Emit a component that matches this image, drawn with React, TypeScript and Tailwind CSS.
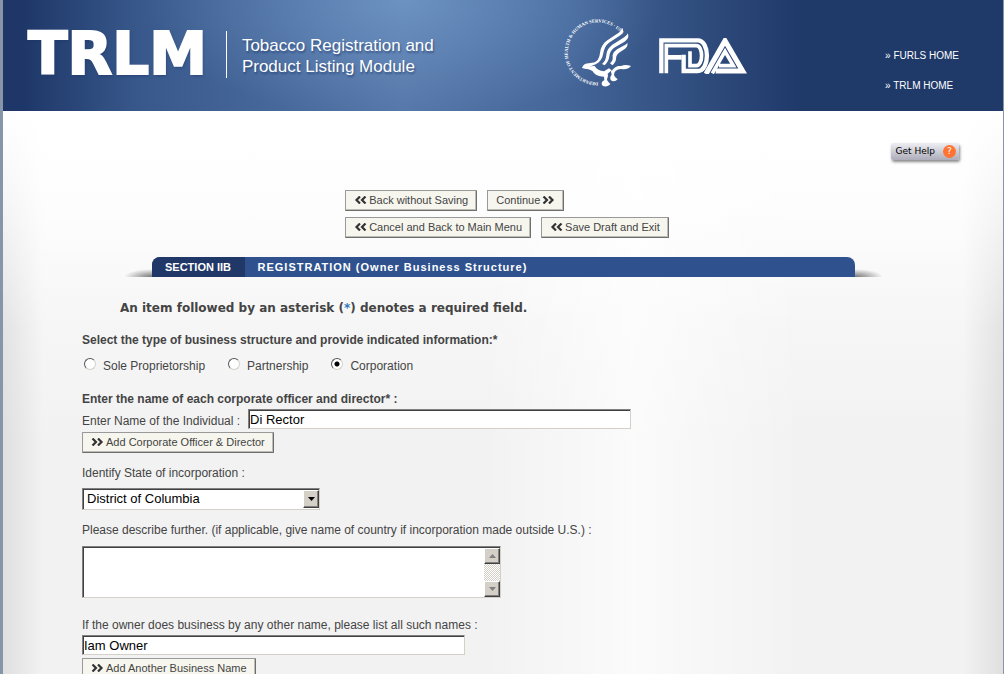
import { useState } from "react";
import type { ReactNode } from "react";

const Chevrons = ({ left }: { left?: boolean }) => (
  <svg viewBox="0 0 13 8" className="w-[13px] h-2 shrink-0" aria-hidden="true">
    <path
      d={left ? "M6 0.500L2.500 4L6 7.500M11.500 0.500L8 4L11.500 7.500" : "M1.500 0.500L5 4L1.500 7.500M7 0.500L10.500 4L7 7.500"}
      fill="none"
      stroke="#333"
      strokeWidth="2.2"
    />
  </svg>
);

const Button = ({ children }: { children: ReactNode }) => (
  <button
    type="button"
    className="h-[21px] px-2 pb-[2px] flex items-center gap-[2px] text-[11px] leading-4 whitespace-nowrap text-[#444] bg-[#f6f6ee] rounded-[1px] border border-t-[#999] border-l-[#999] border-r-[#6e6e6e] border-b-[#6e6e6e] shadow-[inset_-1px_-1px_0_#bdbdb6]"
  >
    {children}
  </button>
);

const inputClass =
  "block h-5 px-px text-[13px] text-black bg-white border border-t-[#808080] border-l-[#808080] border-r-[#d4d0c8] border-b-[#d4d0c8] shadow-[inset_1px_1px_0_#404040] outline-none";

const HhsLogo = () => (
  <svg viewBox="0 0 240 240" className="w-20 h-20" role="img" aria-label="HHS">
    <defs>
      <path id="seal" d="M118 217A90 90 0 1 1 205 112" />
    </defs>
    <text
      fill="#fff"
      className="text-[14px] font-bold font-['Liberation_Serif',serif]"
    >
      <textPath href="#seal">
        DEPARTMENT OF HEALTH &amp; HUMAN SERVICES · USA
      </textPath>
    </text>
    <g fill="#fff">
      <path d="M189 53C196 60 191 71 182 77L152 97C140 106 136 116 133 130C130 146 123 157 110 163L78 176L69 174C72 164 80 160 90 160L107 157C118 151 121 142 123 128C125 112 133 99 145 91L178 69C184 65 188 60 189 53Z" />
      <path d="M206 70C212 82 204 91 194 97L168 112C157 119 153 127 151 138C150 149 145 158 137 166L129 162C138 155 141 146 142 135C143 122 149 112 160 104L191 85C199 80 204 76 206 70Z" />
      <path d="M205 98C208 109 199 117 189 122C177 129 171 135 171 146C171 154 166 160 160 166L153 160C160 153 162 148 161 140C160 130 167 122 177 116L192 108C199 104 203 102 205 98Z" />
      <path d="M78 170L107 168C113 178 122 183 135 184L150 175L158 181L146 191C149 199 144 204 144 209C146 214 150 218 154 222C149 229 139 231 132 228C125 222 128 215 136 210L135 200C119 200 107 194 101 184C95 179 87 177 78 176Z" />
      <path d="M156 184L166 174C172 169 178 168 186 168C196 163 206 165 216 168C209 176 200 179 187 177C178 177 172 180 167 186L165 195C167 201 172 204 176 208C170 215 161 216 155 210C152 203 155 198 158 195Z" />
    </g>
  </svg>
);

const FdaLogo = () => (
  <svg viewBox="0 0 264 108" className="w-[88px] h-9" role="img" aria-label="FDA">
    <g fill="none" stroke="#fff" strokeWidth="13">
      <path d="M7 106V7H116C153 7 153 99 116 99H74V50" />
      <path d="M141 108L198 8L251 99H170" strokeWidth="15" />
    </g>
    <g fill="none" stroke="#fff" strokeWidth="11">
      <path d="M22 106V23H112C133 23 133 83 112 83H93V40" />
      <path d="M20 58H68" strokeWidth="14" />
      <path d="M160 106L198 40L223 83H180" />
    </g>
  </svg>
);

const ScrollArrow = ({ up }: { up?: boolean }) => (
  <span className="h-4 flex items-center justify-center bg-[#d4d0c8] border border-t-white border-l-white border-r-[#404040] border-b-[#404040] shadow-[inset_-1px_-1px_0_#808080]">
    <svg viewBox="0 0 7 4" className="w-[7px] h-1">
      <path d={up ? "M0 4L3.5 0L7 4Z" : "M0 0L3.5 4L7 0Z"} fill="#808080" />
    </svg>
  </span>
);

const structures = ["Sole Proprietorship", "Partnership", "Corporation"];

const App = () => {
  const [structure, setStructure] = useState("Corporation");

  return (
    <div className="min-h-screen border-l-[3px] border-r border-[#8795a8] font-['Liberation_Sans',Arial,sans-serif] text-xs leading-4 text-[#444] bg-[#f2f2f2]">
      <header className="min-h-[111px] pl-[25px] pr-11 flex items-start justify-between text-white bg-[radial-gradient(260px_120px_at_40%_0%,#7fabd888,#7fabd800),linear-gradient(90deg,#1e3768_2%,#39598c_14%,#5576a8_40%,#456699_56%,#1f3969_80%)]">
        <div className="pt-[31px] flex items-center">
          <h1 className="font-['DejaVu_Sans',sans-serif] font-bold text-[58px] leading-[47px] [-webkit-text-stroke:2px_#fff] [text-shadow:1px_2px_3px_#1e376899]">
            TRLM
          </h1>
          <div className="ml-[19px] h-[47px] w-px bg-white" />
          <p className="ml-[15px] pt-[2px] text-[17px] leading-[21px] [text-shadow:1px_2px_2px_#1e376899]">
            Tobacco Registration and
            <br />
            Product Listing Module
          </p>
        </div>
        <div className="pt-[10px] pr-3 flex items-center gap-5">
          <HhsLogo />
          <div className="pt-3">
            <FdaLogo />
          </div>
        </div>
        <nav className="pt-12 flex flex-col gap-[14px] text-[10px]">
          <a href="#furls">» FURLS HOME</a>
          <a href="#trlm">» TRLM HOME</a>
        </nav>
      </header>

      <main className="pt-8 pb-5 bg-[linear-gradient(180deg,#fff,#ffffff00_220px),linear-gradient(90deg,#00000014,#00000000_4%,#00000000_96%,#00000014),linear-gradient(90deg,#ffffff00_48%,#ffffffaa_63%,#ffffff00_80%),linear-gradient(180deg,#fff,#f8f8f8_140px,#f2f2f2_330px)]">
        <div className="pr-11 flex justify-end">
          <button
            type="button"
            className="h-[17px] pl-[5px] pr-[3px] pb-px flex items-center gap-2 rounded-xs font-['DejaVu_Sans',sans-serif] text-[9px] leading-4 text-black bg-linear-to-b from-[#eeeef2] to-[#adadbb] shadow-[1px_2px_3px_#888]"
          >
            Get Help
            <span className="size-[13px] rounded-full bg-[#ff7433] text-white leading-[13px]">
              ?
            </span>
          </button>
        </div>

        <div className="mt-[30px] pl-2 flex justify-center">
          <div className="flex flex-col gap-[6px]">
            <div className="flex gap-[10px]">
              <Button>
                <Chevrons left />
                Back without Saving
              </Button>
              <Button>
                Continue
                <Chevrons />
              </Button>
            </div>
            <div className="flex gap-[10px]">
              <Button>
                <Chevrons left />
                Cancel and Back to Main Menu
              </Button>
              <Button>
                <Chevrons left />
                Save Draft and Exit
              </Button>
            </div>
          </div>
        </div>

        <div className="mt-[19px] flex justify-center items-end">
          <div className="w-7 h-2 bg-[radial-gradient(28px_8px_at_100%_100%,#777,#77777700)]" />
          <h2 className="w-full max-w-[703px] flex text-[11px] leading-5 font-bold text-white bg-[#2f528f] rounded-t-lg overflow-hidden">
            <span className="w-[93px] text-center bg-[#1f3868]">SECTION IIB</span>
            <span className="pl-[13px] tracking-[1px]">
              REGISTRATION (Owner Business Structure)
            </span>
          </h2>
          <div className="w-7 h-2 bg-[radial-gradient(28px_8px_at_0%_100%,#777,#77777700)]" />
        </div>

        <p className="mt-[23px] pl-[117px] font-['DejaVu_Sans',Verdana,sans-serif] text-xs leading-4 font-bold">
          An item followed by an asterisk (<span className="text-[#2f78b7]">*</span>) denotes a
          required field.
        </p>

        <form className="px-[79px] flex flex-col items-start">
          <fieldset className="mt-4">
            <legend className="font-bold">
              Select the type of business structure and provide indicated information:*
            </legend>
            <div className="mt-[10px] pl-[2px] flex gap-[23px]">
              {structures.map((name) => (
                <label key={name} className="flex items-center gap-[7px]">
                  <input
                    type="radio"
                    name="structure"
                    checked={structure === name}
                    onChange={() => setStructure(name)}
                    className="appearance-none size-3 mb-1 rounded-full bg-white border border-t-[#555] border-l-[#555] border-r-[#d4d0c8] border-b-[#d4d0c8] checked:bg-[radial-gradient(circle,#000_2px,#fff_3px)]"
                  />
                  {name}
                </label>
              ))}
            </div>
          </fieldset>

          <h3 className="mt-[17px] font-bold">
            Enter the name of each corporate officer and director* :
          </h3>
          <div className="mt-[2px] flex items-center gap-2">
            <label htmlFor="individual" className="pt-1">
              Enter Name of the Individual :
            </label>
            <input id="individual" defaultValue="Di Rector" className={`${inputClass} w-[383px]`} />
          </div>
          <div className="mt-[3px]">
            <Button>
              <Chevrons />
              Add Corporate Officer &amp; Director
            </Button>
          </div>

          <label htmlFor="state" className="mt-3">
            Identify State of incorporation :
          </label>
          <div className="mt-[7px] relative">
            <select
              id="state"
              defaultValue="dc"
              className="block appearance-none w-[238px] h-[22px] pl-1 pr-5 text-[13px] text-black bg-white border border-t-[#808080] border-l-[#808080] border-r-[#d4d0c8] border-b-[#d4d0c8] shadow-[inset_1px_1px_0_#404040] outline-none"
            >
              <option value="dc">District of Columbia</option>
              <option value="md">Maryland</option>
              <option value="va">Virginia</option>
            </select>
            <span className="absolute top-[2px] right-px w-4 h-[18px] flex items-center justify-center pointer-events-none bg-[#d4d0c8] border border-t-white border-l-white border-r-[#404040] border-b-[#404040] shadow-[inset_-1px_-1px_0_#808080]">
              <svg viewBox="0 0 7 4" className="w-[7px] h-1">
                <path d="M0 0L3.5 4L7 0Z" fill="#000" />
              </svg>
            </span>
          </div>

          <label htmlFor="describe" className="mt-3">
            Please describe further. (if applicable, give name of country if incorporation made
            outside U.S.) :
          </label>
          <div className="mt-2 w-[419px] max-w-full h-[52px] flex pt-px pl-px bg-white border border-t-[#808080] border-l-[#808080] border-r-[#d4d0c8] border-b-[#d4d0c8] shadow-[inset_1px_1px_0_#404040]">
            <textarea id="describe" className="flex-1 resize-none px-1 text-[13px] text-black outline-none" />
            <div
              aria-hidden="true"
              className="w-4 flex flex-col justify-between bg-[repeating-conic-gradient(#d4d0c8_0_25%,#fff_0_50%)] bg-size-[2px_2px]"
            >
              <ScrollArrow up />
              <ScrollArrow />
            </div>
          </div>

          <label htmlFor="other-name" className="mt-[19px]">
            If the owner does business by any other name, please list all such names :
          </label>
          <input
            id="other-name"
            defaultValue="Iam Owner"
            className={`${inputClass} mt-[2px] w-[383px]`}
          />
          <div className="mt-[3px]">
            <Button>
              <Chevrons />
              Add Another Business Name
            </Button>
          </div>
        </form>
      </main>
    </div>
  );
};

export default App;
